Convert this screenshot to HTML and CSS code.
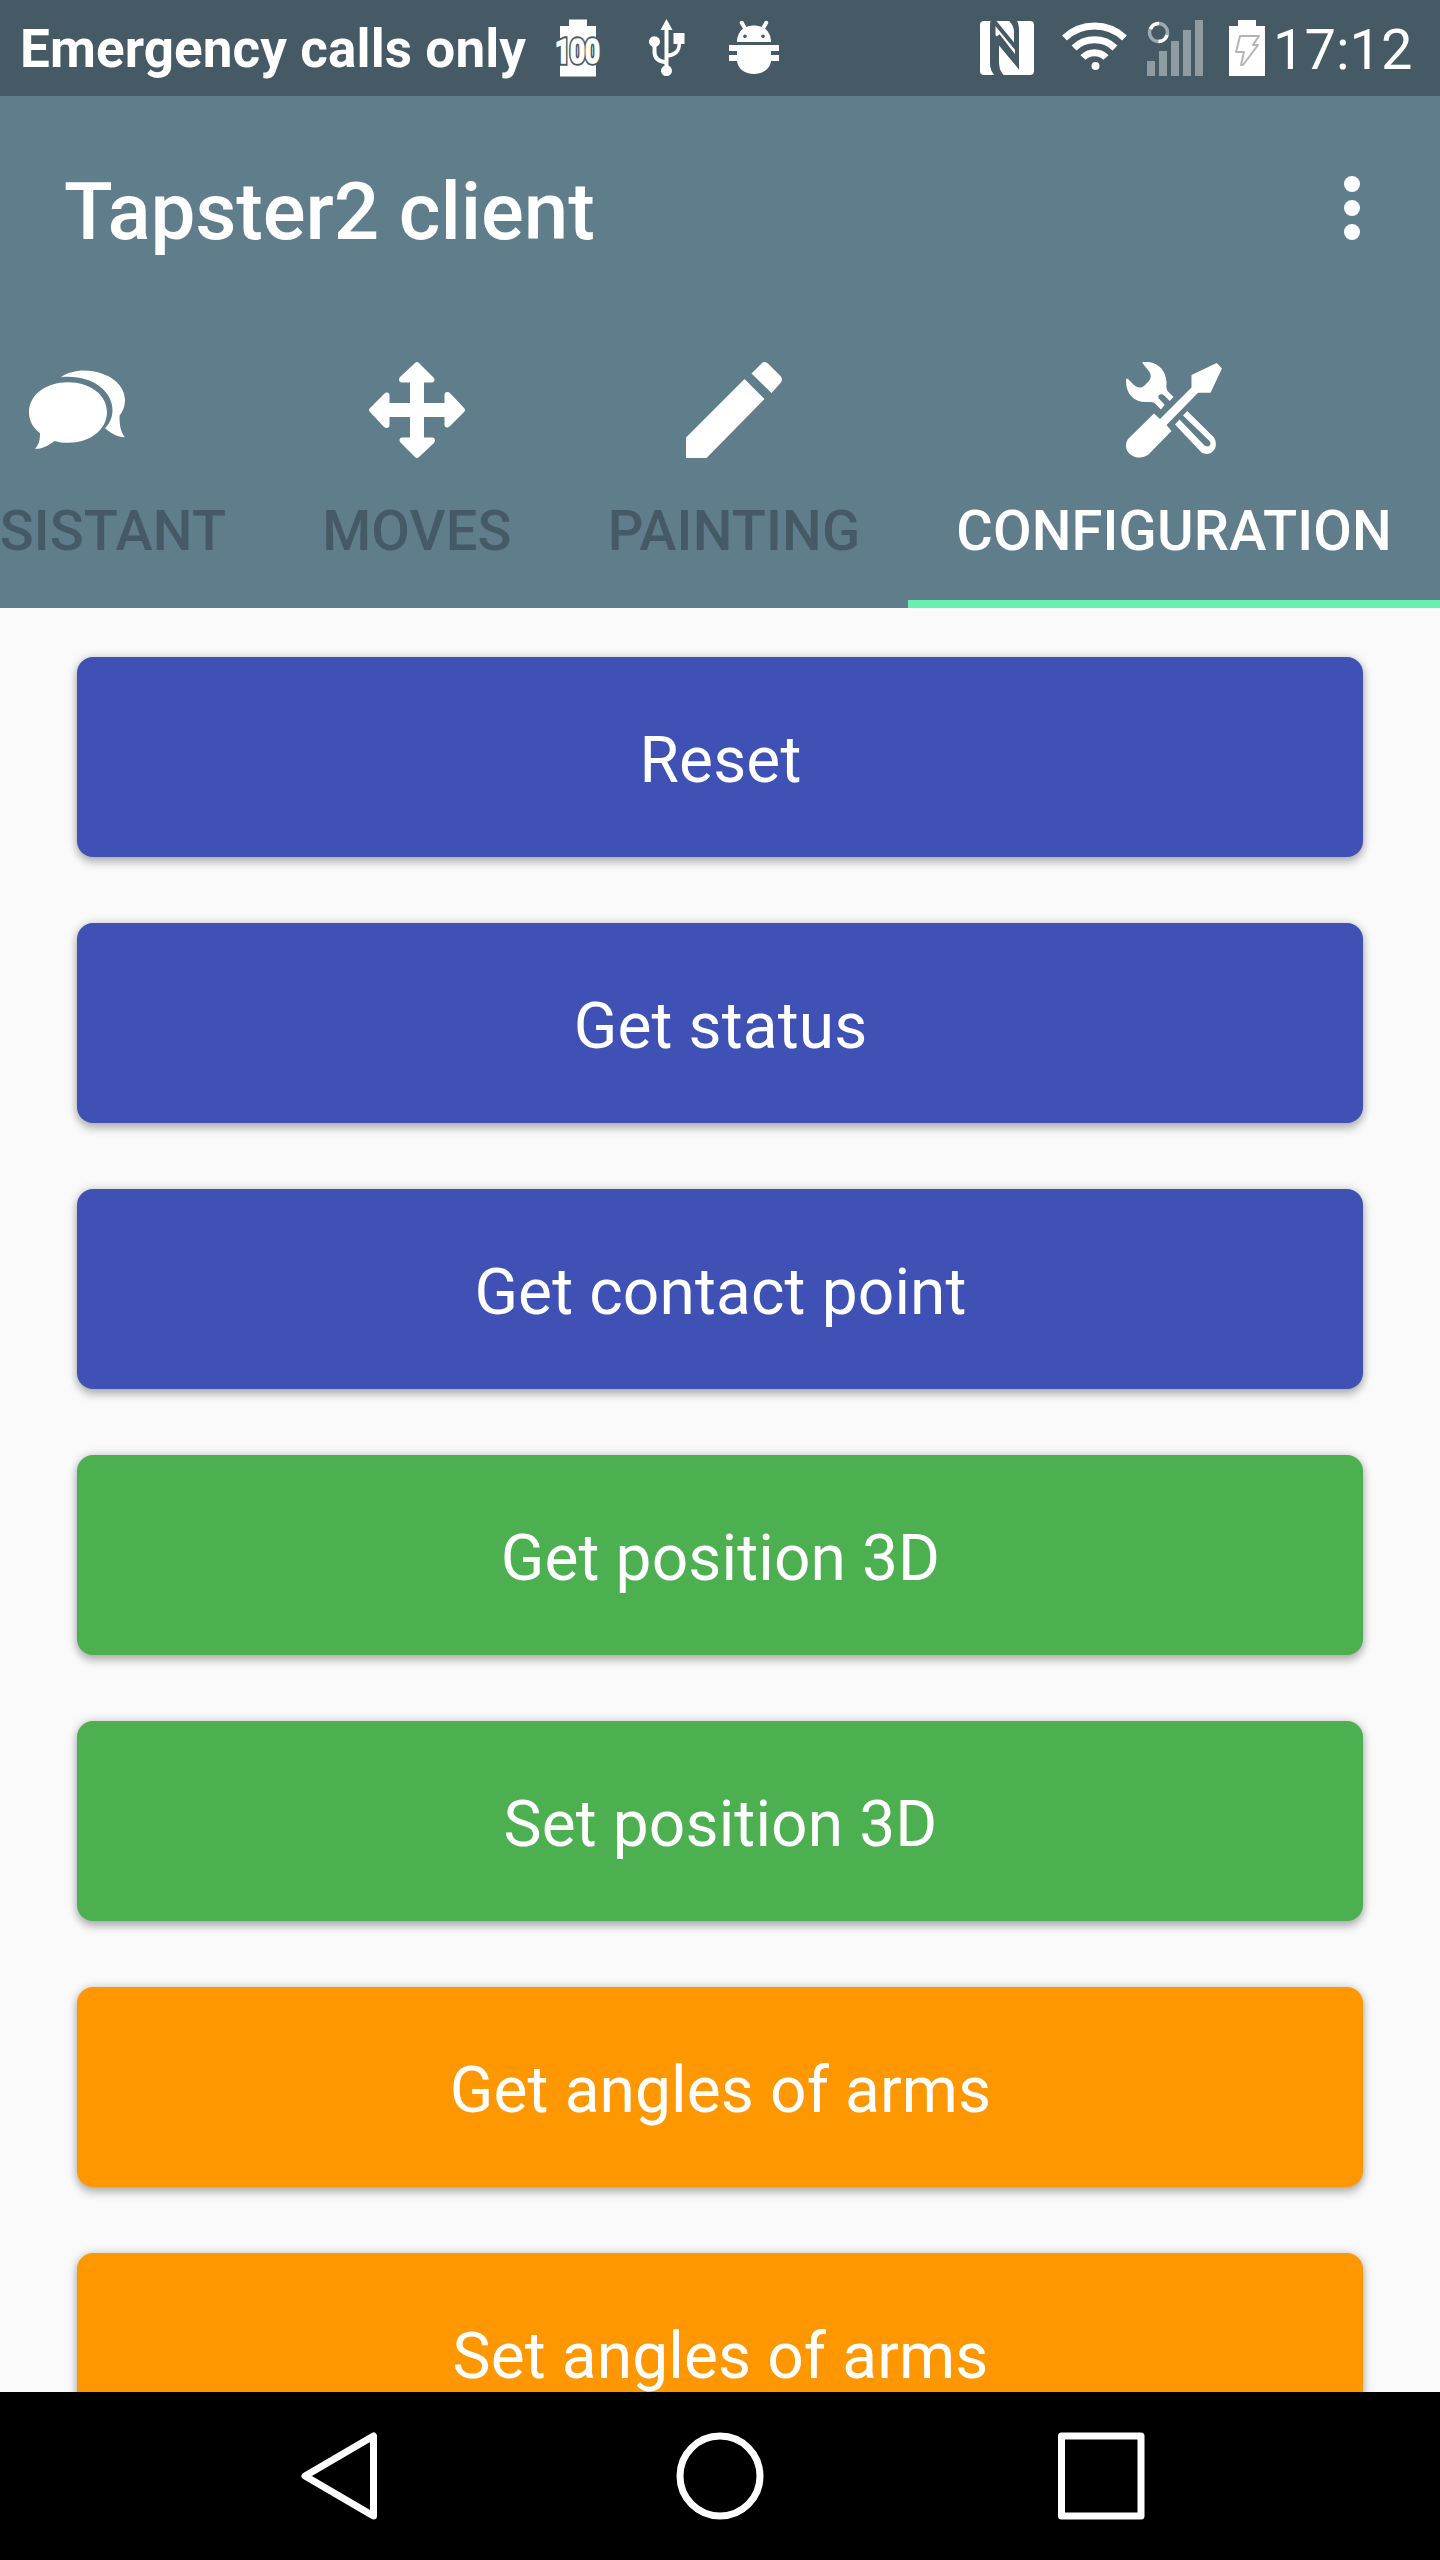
FILE: index.html
```html
<!DOCTYPE html>
<html lang="en">
<head>
<meta charset="utf-8">
<title>Tapster2 client</title>
<link rel="stylesheet" href="styles.css">
</head>
<body>
<div class="screen">
  <header class="status">
    <span class="carrier">Emergency calls only</span>
    <svg class="notifications" width="260" height="96" viewBox="0 0 260 96" fill="#fff">
      <path d="M20 19.500h18V26h9v50.500H11V26h9z"/>
      <text class="charge charge-edge" x="6" y="63" textLength="45" lengthAdjust="spacingAndGlyphs">100</text>
      <text class="charge" x="6" y="63" textLength="45" lengthAdjust="spacingAndGlyphs">100</text>
      <path d="M117.500 19l6 11h-4v23.500c6-1 9-4 9-9.500h-4V33h11v11h-3.500c0 7.500-4 12.500-12.500 13.500v8a5.500 5.500 0 1 1-4 0v-1.500c-8-1-12-5-12-12.500v-4.700a5.500 5.500 0 1 1 4 0v4.700c0 5 3 7.500 8 8.500V30h-4z"/>
      <path d="M188 42c0-6 2.500-10.500 6-13.200l-3-5a2 2 0 0 1 3.500-2l3 5.200c4.500-2 10.500-2 15 0l3-5.200a2 2 0 0 1 3.500 2l-3 5c3.500 2.700 6 7.200 6 13.200zM180 45h50v6h-8v4h8v6h-8c-1 8-8 13-17 13s-16-5-17-13h-8v-6h8v-4h-8z"/>
      <circle class="eye" cx="196" cy="36.300" r="1.800"/><circle class="eye" cx="214" cy="36.300" r="1.800"/>
    </svg>
    <svg class="signals" width="297" height="96" viewBox="0 0 297 96" fill="#fff">
      <rect x="4" y="21" width="54" height="54" rx="4"/>
      <path class="nfc" d="M35 20q5 5 5 12v16L17 20q-1 2-1 6v38q0 6 5 11h4q-4-5-4-13V40l20 24V30q0-6-3-10zM17.500 24v37q0 9 4 14.500M22 35.500l19 24.500"/>
      <g class="wave"><path d="M88.500 38c17-16 43-16 60 0"/><path d="M98 48c11-11 30-11 41 0"/><path d="M107 57.500c6-6.500 17-6.500 23 0"/></g>
      <circle cx="119.500" cy="66" r="4"/>
      <path class="bars" d="M171 61h8v15h-8zM183 51h8v25h-8zM195 41h8v35h-8zM207 30h8v46h-8zM219 20h8v56h-8z"/>
      <circle class="ring-dim" cx="182.500" cy="32.500" r="9"/>
      <path class="ring" d="M174.500 29a9 9 0 0 1 8.500-5.500M191 35a9 9 0 0 1-8.500 6.500"/>
      <path d="M262 20h18v6h9v50h-36V26h9z"/>
      <path class="bolt" d="M264 36h19l-6 9h5l-15 20h-2l3-13h-8z"/>
    </svg>
    <span class="clock">17:12</span>
  </header>
  <div class="toolbar">
    <h1 class="title">Tapster2 client</h1>
    <div class="overflow"><i></i><i></i><i></i></div>
  </div>
  <nav class="tabs">
    <div class="tab">
      <svg class="icon" viewBox="0 2.300 96 96"><path d="M39 22.500C61 22.500 78 35 78 52.500S61 83 39 83c-5 0-9-.5-13.500-1.800C19 86 13 89.500 6 89c4-4 5-9 5-15.500C4 68 0 61 0 52.500 0 35 17 22.500 39 22.500zM32 17.500C42 10 59 9 72 13.500 86 18 96 28 96 40.500c0 6-2 11-5.500 15.500 0 9 1 16.500 5.500 21.500-8-.5-13-3-20-9 5-5 7.500-11.500 7.500-18C83.500 31 62 14.500 32 17.500z"/></svg>
      <span>ASSISTANT</span>
    </div>
    <div class="tab">
      <svg class="icon" viewBox="0 0 96 96"><path d="M46 1q2-2 4 0l14 14c3 3 1 5.500-1 5.500h-8V41h20.500v-8c0-3 3-4 5.500-2l14 15q2 2 0 4L81 64c-3 3-5.500 1-5.500-1v-8H55v20.500h8c3 0 4 3 2 5.500L50 95q-2 2-4 0L32 81c-3-3-1-5.500 1-5.500h8V55H20.500v8c0 3-3 4-5.500 2L1 50q-2-2 0-4l14-14c3-3 5.500-1 5.500 1v8H41V20.500h-8c-3 0-4-3-2-5.500z"/></svg>
      <span>MOVES</span>
    </div>
    <div class="tab">
      <svg class="icon" viewBox="0 0 96 96"><path d="M0 96V75.500L58.500 17l20 20L20.500 96zM65.500 11.500l10-10q3-3 6.500 0L94.500 14q3 3.500 0 7L85.500 31z"/></svg>
      <span>PAINTING</span>
    </div>
    <div class="tab active">
      <svg class="icon" viewBox="0 0 96 96"><path d="M17 0C31-1.500 40 8 40.500 20c.2 4-1 6.500 1.500 9.500l5.500 5.500-3.800 4-5.200-5.200c-3.500-3.300-8-.5-5.500 3l5.700 6-3.700 4.700-5.500-5.500c-2-2-4-2-9-2C8 40.500 0 32 0 19c0-3 1-3.200 2.500-1.500L8 23q5.500 4.500 10 1l4.500-4.500q4-4.500 1-9.500l-6-7.500q-2-2-.5-2.500zM90.700 1l5.300 5.500-11.500 24.300H72L40.500 63l5 6-23 23.500C11 101-6 90 2 77L28 51.500l6 5.500 31.500-31.500V13zM61.200 49L88 75.500c6 10-3.500 21-13 14.500L49 62.500l4.500-5L78 83c4 3.500 8.500 0 5.500-4L57 53.500z"/></svg>
      <span>CONFIGURATION</span>
    </div>
  </nav>
  <main class="content">
    <button class="btn indigo">Reset</button>
    <button class="btn indigo">Get status</button>
    <button class="btn indigo">Get contact point</button>
    <button class="btn green">Get position 3D</button>
    <button class="btn green">Set position 3D</button>
    <button class="btn orange">Get angles of arms</button>
    <button class="btn orange">Set angles of arms</button>
  </main>
  <footer class="navbar">
    <svg width="1440" height="168" viewBox="0 0 1440 168" fill="none" stroke="#fff" stroke-width="7" stroke-linejoin="round">
      <path d="M373.500 44v80L305 84z"/>
      <circle cx="720" cy="84" r="40"/>
      <rect x="1061.500" y="44" width="79.500" height="80"/>
    </svg>
  </footer>
</div>
</body>
</html>
```
FILE: styles.css
```css
* { box-sizing: border-box; }
body { margin: 0; font-family: Roboto, sans-serif; color: #fff; }
.screen { width: 1440px; height: 2560px; display: flex; flex-direction: column; overflow: hidden; background: #fafafa; }
.status { height: 96px; flex: none; background: #455a64; display: flex; align-items: center; padding: 0 0 0 20px; }
.carrier { flex: none; font-size: 53px; font-weight: 700; letter-spacing: .1px; width: 529px; white-space: nowrap; line-height: 62px; padding-top: 2px; }
.notifications { flex: none; }
.charge { font: 700 33px Roboto, sans-serif; stroke: #fff; stroke-width: 1.6px; }
.charge-edge { stroke: #455a64; stroke-width: 5.5px; }
.eye { fill: #455a64; }
.signals { flex: none; margin-left: 167px; }
.nfc { fill: none; stroke: #455a64; stroke-width: 4px; }
.wave { fill: none; stroke: #fff; stroke-width: 7px; }
.bars { fill: #8f9ca2; }
.ring-dim, .ring { fill: none; stroke: #9caab1; stroke-width: 3.5px; }
.ring { stroke: #fff; }
.bolt { fill: none; stroke: #b5b5b5; stroke-width: 2px; stroke-linejoin: round; }
.clock { flex: none; font-size: 56px; line-height: 66px; white-space: nowrap; padding-top: 3px; }
.toolbar { height: 224px; flex: none; background: #607d8b; display: flex; align-items: center; justify-content: space-between; padding: 0 80px 0 64px; }
.title { margin: 7px 0 0; font-size: 80px; line-height: 94px; font-weight: 500; letter-spacing: -.12px; white-space: nowrap; }
.overflow { display: flex; flex-direction: column; gap: 8px; }
.overflow i { width: 16px; height: 16px; border-radius: 50%; background: #fff; }
.tabs { height: 288px; flex: none; background: #607d8b; display: flex; justify-content: flex-end; overflow: hidden; }
.tab { flex: none; display: flex; flex-direction: column; align-items: center; padding: 42px 48px 0; color: #455a64; font-size: 56px; font-weight: 500; letter-spacing: .15px; line-height: 66px; border-bottom: 8px solid transparent; }
.tab.active { color: #fff; border-color: #69f0ae; letter-spacing: .17px; }
.icon { width: 96px; height: 96px; fill: #fff; margin-bottom: 40px; }
.content { flex: 1; min-height: 0; overflow: hidden; display: flex; flex-direction: column; gap: 66px; padding: 49px 77px 0; }
.btn { flex: none; height: 200px; border: 0; border-radius: 16px; padding: 6px 0 0 1px; font: 400 64px Roboto, sans-serif; letter-spacing: .13px; color: #fff; box-shadow: 0 6px 8px rgba(0,0,0,.22), 0 0 10px rgba(0,0,0,.2); }
.indigo { background: #3f51b5; }
.green { background: #4caf50; }
.orange { background: #ff9800; }
.navbar { height: 168px; flex: none; background: #000; }
.navbar svg { display: block; }
```
